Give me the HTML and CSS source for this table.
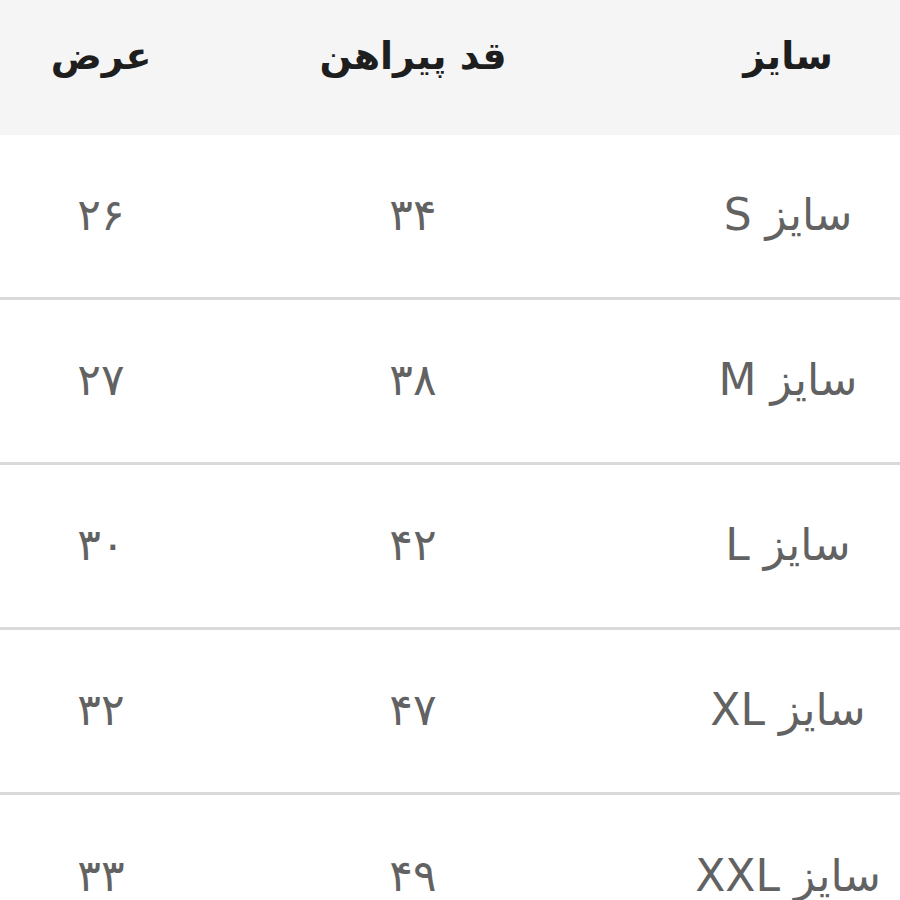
FILE: index.html
```html
<!DOCTYPE html>
<html lang="fa" dir="rtl">
<head>
<meta charset="utf-8">
<link rel="stylesheet" href="styles.css">
</head>
<body>
<div class="table">
  <div class="row head">
    <div class="cell c1">سایز</div>
    <div class="cell c2">قد پیراهن</div>
    <div class="cell c3">عرض</div>
  </div>
  <div class="row">
    <div class="cell c1">سایز S</div>
    <div class="cell c2">۳۴</div>
    <div class="cell c3">۲۶</div>
  </div>
  <div class="row">
    <div class="cell c1">سایز M</div>
    <div class="cell c2">۳۸</div>
    <div class="cell c3">۲۷</div>
  </div>
  <div class="row">
    <div class="cell c1">سایز L</div>
    <div class="cell c2">۴۲</div>
    <div class="cell c3">۳۰</div>
  </div>
  <div class="row">
    <div class="cell c1">سایز XL</div>
    <div class="cell c2">۴۷</div>
    <div class="cell c3">۳۲</div>
  </div>
  <div class="row last">
    <div class="cell c1">سایز XXL</div>
    <div class="cell c2">۴۹</div>
    <div class="cell c3">۳۳</div>
  </div>
</div>
</body>
</html>
```
FILE: styles.css
```css
html, body {
  margin: 0;
  padding: 0;
  background: #ffffff;
}
body {
  font-family: "DejaVu Sans", "Noto Sans", sans-serif;
  width: 900px;
  height: 900px;
  overflow: hidden;
}
.table {
  display: flex;
  flex-direction: column;
}
.row {
  display: grid;
  grid-template-columns: 224px 1fr 202px;
  align-items: center;
  height: 162px;
  border-bottom: 3px solid #dadada;
  color: #626262;
  font-size: 44px;
  padding-bottom: 4px;
  box-sizing: border-box;
  height: 165px;
}
.row.head {
  height: 135px;
  border-bottom: none;
  background: #f5f5f5;
  color: #1e1e1e;
  font-weight: bold;
  font-size: 38px;
  padding-bottom: 24px;
}
.row.last {
  border-bottom: none;
}
.cell {
  text-align: center;
}
.c2 {
  padding-right: 52px;
}
```
